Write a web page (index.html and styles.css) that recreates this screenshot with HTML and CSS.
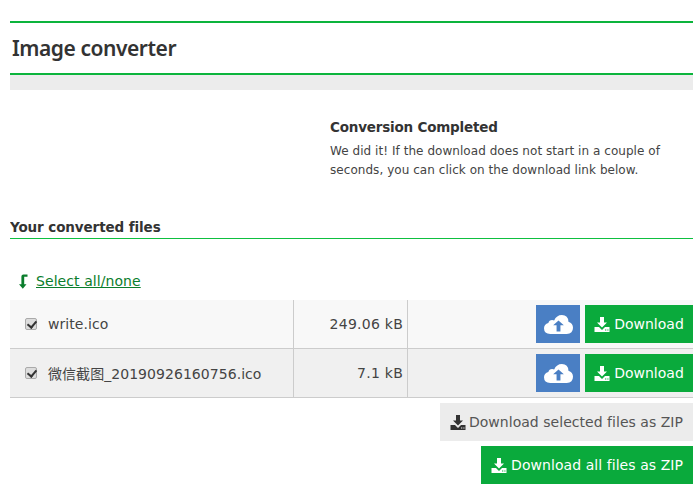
FILE: index.html
```html
<!DOCTYPE html>
<html lang="en">
<head>
<meta charset="utf-8">
<title>Image converter</title>
<link rel="stylesheet" href="styles.css">
</head>
<body>
<svg class="defs" width="0" height="0" aria-hidden="true">
  <symbol id="dl" viewBox="0 0 15 15">
    <path d="M5.500 0h4v5.500h3L7.500 10.600 2.500 5.500h3zM0 10h4.500l3 3 3-3H15v5H0zM10.500 12.500v1h1.300v-1zM12.800 12.500v1h1.200v-1z" fill-rule="evenodd"/>
  </symbol>
  <symbol id="cloud" viewBox="0 0 30 22" preserveAspectRatio="none">
    <path fill-rule="evenodd" d="M6.500 22Q0 21.500 0 15.300 0 10.700 4.500 9.200 5.200 5.800 8.500 5.800 9.600 5.800 10.500 6.400 13 0 18.500 0 25 0 25.300 7.800 30 9.500 30 14.800 30 21.500 23.500 22zM15 6.500 9.500 12h3.500v7h4v-7h3.500z"/>
  </symbol>
</svg>
<main class="page">
  <header class="title-bar"><h1>Image converter</h1></header>
  <div class="band"></div>
  <section class="status">
    <h2>Conversion Completed</h2>
    <p>We did it! If the download does not start in a couple of seconds, you can click on the download link below.</p>
  </section>
  <h3 class="files-head">Your converted files</h3>
  <div class="select-row">
    <svg class="sel-icon" viewBox="0 0 9 15"><path d="M3.800 14.800 0 10.200h2.400V2.400Q2.400 .4 4.400 .4h4.100v2.400H5.200v7.400h2.300z"/></svg>
    <a href="#">Select all/none</a>
  </div>
  <div class="files">
    <div class="row row-a">
      <div class="c-name"><input type="checkbox" checked><span>write.ico</span></div>
      <div class="c-size">249.06 kB</div>
      <div class="c-act">
        <button class="btn btn-up" aria-label="Upload"><svg class="cloud"><use href="#cloud"/></svg></button>
        <button class="btn btn-dl"><svg class="dl"><use href="#dl"/></svg>Download</button>
      </div>
    </div>
    <div class="row row-b">
      <div class="c-name"><input type="checkbox" checked><span>微信截图_20190926160756.ico</span></div>
      <div class="c-size">7.1 kB</div>
      <div class="c-act">
        <button class="btn btn-up" aria-label="Upload"><svg class="cloud"><use href="#cloud"/></svg></button>
        <button class="btn btn-dl"><svg class="dl"><use href="#dl"/></svg>Download</button>
      </div>
    </div>
  </div>
  <div class="zip">
    <button class="btn btn-grey"><svg class="dl"><use href="#dl"/></svg>Download selected files as ZIP</button>
    <button class="btn btn-dl"><svg class="dl"><use href="#dl"/></svg>Download all files as ZIP</button>
  </div>
</main>
</body>
</html>
```
FILE: styles.css
```css
* { box-sizing: border-box; }
html, body { margin: 0; padding: 0; background: #fff; }
body {
  font-family: "DejaVu Sans", Verdana, "Noto Sans CJK SC", sans-serif;
  color: #444;
  font-size: 13px;
}
.defs { position: absolute; }
.page { width: 683px; margin-left: 10px; padding-top: 21px; height: 495px; overflow: hidden; }
.title-bar {
  height: 54px;
  border-top: 2px solid #0cb43c;
  border-bottom: 2px solid #0cb43c;
  display: flex;
  align-items: center;
  padding-left: 2px;
}
h1 { margin: 0; font: 600 21px/1 "Noto Sans", "DejaVu Sans", sans-serif; letter-spacing: -.45px; color: #333; }
.band { height: 15px; background: #ececec; }
.status { margin-left: 320px; padding-top: 27px; height: 123px; }
.status h2 { margin: 0 0 5px; font-size: 13.5px; letter-spacing: -.2px; line-height: 20px; font-weight: 700; color: #333; }
.status p { margin: 0; font-size: 12px; letter-spacing: .05px; line-height: 19px; color: #444; }
.files-head {
  margin: 0;
  font-size: 13.5px; letter-spacing: -.1px; line-height: 20px; font-weight: 700; color: #333;
  border-bottom: 1px solid #0ec040;
  height: 26px;
  padding-top: 4px;
}
.select-row { display: flex; align-items: center; gap: 8px; height: 61px; padding: 23px 0 0 9px; }
.sel-icon { width: 9px; height: 15px; fill: #0a7d2c; }
.select-row a { color: #0a7d2c; font-size: 14px; letter-spacing: .07px; }
.row { display: flex; height: 49px; border-bottom: 1px solid #ccc; }
.row-a { background: #f8f8f8; }
.row-b { background: #f0f0f0; }
.c-name { width: 284px; display: flex; align-items: center; padding-left: 15px; gap: 11px; border-right: 1px solid #ccc; font-size: 14px; letter-spacing: .05px; }
.c-name input {
  appearance: none; position: relative; margin: 0; width: 12px; height: 12px;
  background: #ddd; border: 1px solid #aaa; border-radius: 2px;
}
.c-name input::after {
  content: ""; position: absolute; left: 3px; top: 0; width: 4px; height: 7px;
  border: solid #333; border-width: 0 2px 2px 0; transform: rotate(40deg);
}
.c-size { width: 114px; display: flex; align-items: center; justify-content: flex-end; padding-right: 4px; border-right: 1px solid #ccc; font-size: 14px; letter-spacing: .25px; }
.c-act { flex: 1; display: flex; justify-content: flex-end; gap: 5px; padding-top: 5px; }
.btn {
  display: inline-flex; align-items: center; justify-content: center;
  height: 38px; border: 0; padding: 0 10px; gap: 4px;
  font: 14px "DejaVu Sans", sans-serif; letter-spacing: .06px; white-space: nowrap;
}
.btn-up { width: 44px; padding: 0; background: #4a7fc4; }
.cloud { width: 29px; height: 19px; fill: #fff; }
.btn-dl { background: #0aaa3c; color: #fff; }
.btn-dl .dl { fill: #fff; }
.btn-grey { background: #ececec; color: #555; gap: 3px; letter-spacing: .03px; }
.btn-grey .dl { fill: #333; }
.dl { width: 16px; height: 15px; }
.row .btn-dl { width: 108px; padding: 0; letter-spacing: 0; }
.zip { display: flex; flex-direction: column; align-items: flex-end; gap: 5px; padding-top: 5px; }
```
